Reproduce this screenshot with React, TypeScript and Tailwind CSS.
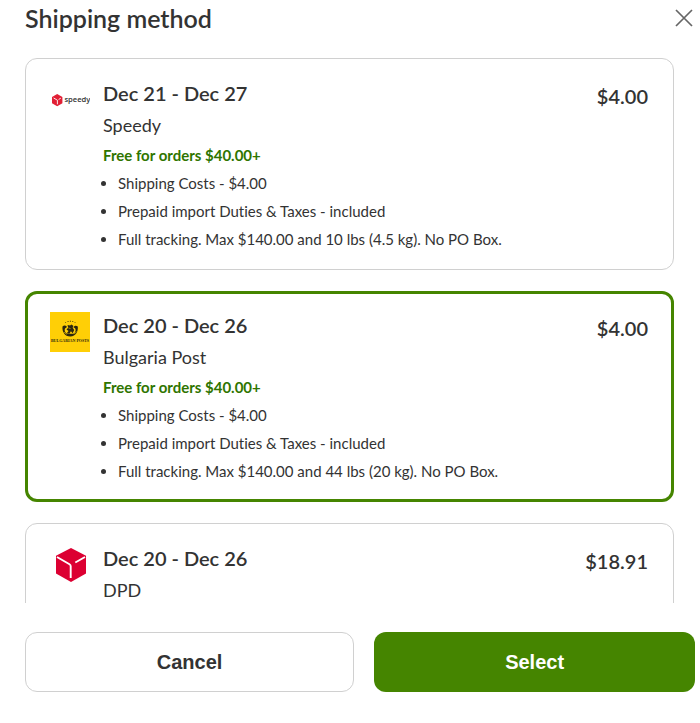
import { useState, type ReactNode } from "react";
import { clsx } from "clsx";

type ShippingOption = {
  id: string;
  dates: string;
  carrier: string;
  price: string;
  logo: ReactNode;
  freeFrom?: string;
  details?: string[];
};

function SpeedyLogo() {
  return (
    <svg viewBox="0 0 40 40" className="size-10" role="img" aria-label="Speedy logo">
      <path d="M7.200 14 12.400 17v6.200l-5.200 3.100L2 23.200V17z" fill="#e11f35" />
      <path d="M3.600 18 7.400 20.200V24.300M8.600 19.500l2.200-1.300" fill="none" stroke="#fff" strokeWidth="0.9" />
      <text x="14.400" y="22.400" fontSize="7.600" fontWeight="600" fill="#333" className="font-['Open_Sans',sans-serif]">
        speedy
      </text>
    </svg>
  );
}

function BulgariaPostLogo() {
  return (
    <svg viewBox="0 0 40 40" className="size-10" role="img" aria-label="Bulgaria Post logo">
      <rect width="40" height="40" fill="#ffcf06" />
      {/* Crown */}
      <path d="m16 11-.6-.7M18.200 10l-.3-1M20.400 9.800V8.700M22.600 10l.3-1M24.600 11l.6-.7" stroke="#55480c" strokeWidth="1" />
      {/* Horn and lion */}
      <path d="M12.500 14.500c1.500-1.500 3.500-1 4.500.5l-2 1.500c-1 2 .2 4 2 5.200h6.500c2-1.200 2.800-3.500 1.600-5.500l-1.700-1c.8-1.700 3-2 4.400-.6.500 4.700-1.800 9.900-7.500 9.900s-8.400-5.100-7.800-10z" fill="#2b2610" />
      <path d="m17.500 13 2.600.6 1.200-1 2 1.200-.6 2 1.500 2.200-1.500 3.300-1.800-2-1.500 2.500-2.600-.6 1.700-2.200-2-1.500 1.700-1.700z" fill="#2b2610" />
      <path d="m14 20 2.600 2.400M26.500 19.500l-2.300 2.600M18.500 16l2 .5" stroke="#ffcf06" strokeWidth="0.6" />
      <text x="20" y="29.800" textAnchor="middle" fontSize="4" fontWeight="700" fill="#2b2610" className="font-['Liberation_Serif',serif]">
        BULGARIAN POSTS
      </text>
    </svg>
  );
}

function DpdLogo() {
  return (
    <svg viewBox="0 0 40 40" className="size-10" role="img" aria-label="DPD logo">
      <path d="M21 3 36 10.800v17.800L21 37 6 28.600V10.800z" fill="#dc0032" />
      <path d="m7 12 12.500 7.300q1.200.7 1.200 2V33M25.300 17.500 35 12" fill="none" stroke="#fff" strokeWidth="1.900" />
    </svg>
  );
}

const options: ShippingOption[] = [
  {
    id: "speedy",
    dates: "Dec 21 - Dec 27",
    carrier: "Speedy",
    price: "$4.00",
    logo: <SpeedyLogo />,
    freeFrom: "$40.00+",
    details: [
      "Shipping Costs - $4.00",
      "Prepaid import Duties & Taxes - included",
      "Full tracking. Max $140.00 and 10 lbs (4.5 kg). No PO Box.",
    ],
  },
  {
    id: "bulgaria-post",
    dates: "Dec 20 - Dec 26",
    carrier: "Bulgaria Post",
    price: "$4.00",
    logo: <BulgariaPostLogo />,
    freeFrom: "$40.00+",
    details: [
      "Shipping Costs - $4.00",
      "Prepaid import Duties & Taxes - included",
      "Full tracking. Max $140.00 and 44 lbs (20 kg). No PO Box.",
    ],
  },
  {
    id: "dpd",
    dates: "Dec 20 - Dec 26",
    carrier: "DPD",
    price: "$18.91",
    logo: <DpdLogo />,
  },
];

type OptionCardProps = {
  option: ShippingOption;
  selected: boolean;
  onSelect: () => void;
};

function OptionCard({ option, selected, onSelect }: OptionCardProps) {
  return (
    <label
      className={clsx(
        "relative flex cursor-pointer items-start rounded-xl bg-white",
        selected
          ? "border-3 border-[#458500] px-[22px] pt-[15px] pb-3.5"
          : "border border-[#d0d0d0] px-6 pt-[18px] pb-4"
      )}
    >
      <input type="radio" name="shipping" value={option.id} checked={selected} onChange={onSelect} className="sr-only" />
      <div className="mr-[13px] shrink-0 pt-[3px]">{option.logo}</div>
      <div className="min-w-0 flex-1">
        <p className="text-xl/8 font-semibold">{option.dates}</p>
        <p className="text-lg/8">{option.carrier}</p>
        {option.freeFrom && (
          <p className="text-[15px]/7 font-bold text-[#2f7500]">Free for orders {option.freeFrom}</p>
        )}
        {option.details && (
          <ul className="list-disc pl-[15px] text-[15px]/7">
            {option.details.map((detail) => (
              <li key={detail}>{detail}</li>
            ))}
          </ul>
        )}
      </div>
      <p className="pt-[3px] pr-px text-xl/8 font-semibold">{option.price}</p>
    </label>
  );
}

export default function App() {
  const [selected, setSelected] = useState("bulgaria-post");

  return (
    <main className="bg-white font-['Lato',sans-serif] text-[#333] [font-variant-ligatures:none]">
      <header className="flex items-center justify-between pt-0.5 pr-1.5 pl-[25px]">
        <h1 className="text-[25px]/8 font-semibold">Shipping method</h1>
        <button type="button" aria-label="Close" className="cursor-pointer">
          <svg viewBox="0 0 20 20" className="size-5" fill="none" stroke="#666" strokeWidth="1.700">
            <path d="m2 2 16 16M18 2 2 18" />
          </svg>
        </button>
      </header>

      <div className="mt-6 h-[545px] overflow-hidden pr-[26px] pl-[25px]">
        <div className="flex flex-col gap-[21px]">
          {options.map((option) => (
            <OptionCard
              key={option.id}
              option={option}
              selected={option.id === selected}
              onSelect={() => setSelected(option.id)}
            />
          ))}
        </div>
      </div>

      <footer className="mt-[29px] flex gap-5 pr-[5px] pb-8 pl-[25px] font-['Liberation_Sans',sans-serif] text-xl font-bold">
        <button type="button" className="h-15 flex-51 cursor-pointer rounded-xl border border-[#d0d0d0] bg-white">
          Cancel
        </button>
        <button type="button" className="h-15 flex-50 cursor-pointer rounded-xl bg-[#458500] text-white">
          Select
        </button>
      </footer>
    </main>
  );
}
